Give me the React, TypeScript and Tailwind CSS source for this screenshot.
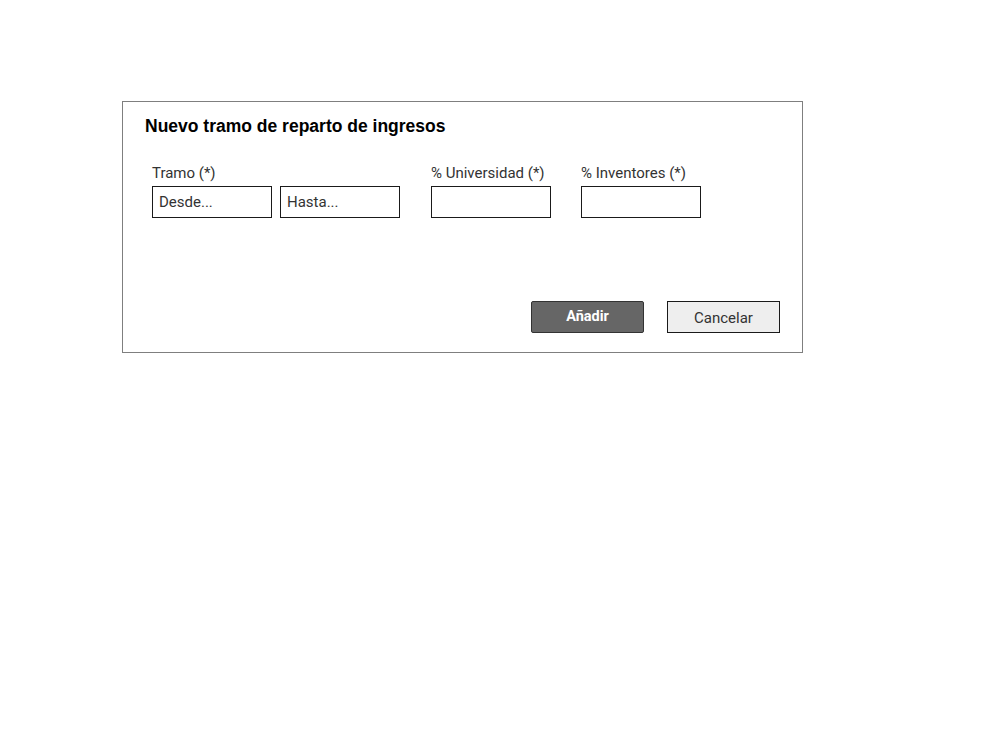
import React from "react";

const Field = ({ label, children, className = "" }: { label: string; children: React.ReactNode; className?: string }) => (
  <div className={"flex flex-col " + className}>
    <div className="h-[16px] leading-[16px] text-[15px] text-[#333333] mb-[5px] whitespace-nowrap" style={{ fontFamily: "Roboto, sans-serif" }}>
      {label}
    </div>
    <div className="flex gap-[8px]">{children}</div>
  </div>
);

const Input = ({ placeholder }: { placeholder?: string }) => (
  <div
    className="w-[120px] h-[32px] border border-[#1a1a1a] bg-white flex items-center pl-[6px] text-[15px] text-[#333333]"
    style={{ fontFamily: "Roboto, sans-serif" }}
  >
    {placeholder}
  </div>
);

export default function App() {
  return (
    <div className="w-[1000px] h-[750px] bg-white pt-[101px] pl-[122px]">
      <div className="w-[681px] h-[252px] border border-[#7f7f7f] bg-white flex flex-col pt-[14px] pl-[22px] pr-[22px]">
        <div
          className="h-[20px] leading-[20px] text-[17.5px] font-bold text-black"
          style={{ fontFamily: "'Liberation Sans', Arial, sans-serif" }}
        >
          Nuevo tramo de reparto de ingresos
        </div>
        <div className="flex mt-[29px] pl-[7px]">
          <Field label="Tramo (*)">
            <Input placeholder="Desde..." />
            <Input placeholder="Hasta..." />
          </Field>
          <Field label="% Universidad (*)" className="ml-[31px]">
            <Input />
          </Field>
          <Field label="% Inventores (*)" className="ml-[30px]">
            <Input />
          </Field>
        </div>
        <div className="flex justify-end gap-[23px] mt-[83px]">
          <div
            className="w-[113px] h-[32px] bg-[#666666] border border-[#333333] rounded-[2px] flex items-center justify-center text-white font-bold text-[14.5px]"
            style={{ fontFamily: "Roboto, sans-serif" }}
          >
            Añadir
          </div>
          <div
            className="w-[113px] h-[32px] bg-[#eeeeee] border border-[#1a1a1a] flex items-center justify-center text-[#333333] text-[15px] pt-[2px]"
            style={{ fontFamily: "Roboto, sans-serif" }}
          >
            Cancelar
          </div>
        </div>
      </div>
    </div>
  );
}
